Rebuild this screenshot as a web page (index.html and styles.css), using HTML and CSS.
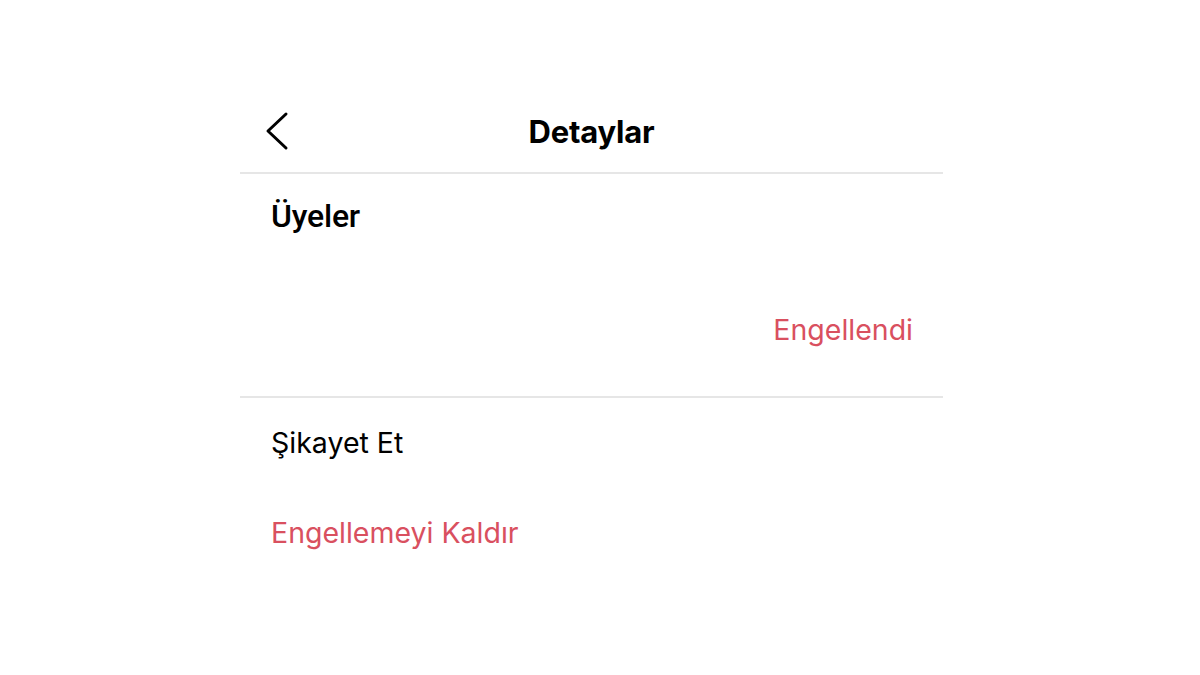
FILE: index.html
```html
<!DOCTYPE html>
<html lang="tr">
<head>
    <meta charset="UTF-8">
    <meta name="viewport" content="width=device-width, initial-scale=1.0">
    <title>Detaylar</title>
    <link rel="stylesheet" href="styles.css">
</head>
<body>

    <div class="screen">
        <header class="topbar">
            <button class="back-btn" aria-label="Geri">
                <svg width="24" height="40" viewBox="0 0 24 40">
                    <path d="M21 3 L3 20 L21 37" fill="none" stroke="#000" stroke-width="3" stroke-linecap="round" stroke-linejoin="round"/>
                </svg>
            </button>
            <h1>Detaylar</h1>
        </header>

        <!-- Uyeler listesi -->
        <section class="members">
            <h2>Üyeler</h2>
            <div class="member-row">
                <span class="status">Engellendi</span>
            </div>
        </section>

        <!-- Islemler -->
        <section class="actions">
            <a href="#" class="action">Şikayet Et</a>
            <a href="#" class="action danger">Engellemeyi Kaldır</a>
        </section>
    </div>

</body>
</html>
```

FILE: styles.css
```css
body {
    font-family: Inter, "Noto Sans", Arial, sans-serif;
    background-color: #ffffff;
    color: #000000;
    margin: 0;
    padding: 0;
}
.screen {
    width: 703px;
    margin-left: 240px;
    padding-top: 90px;
}
.topbar {
    display: grid;
    grid-template-columns: 1fr auto 1fr;
    align-items: center;
    height: 82px;
    border-bottom: 2px solid #e6e6e6;
}
.topbar h1 {
    margin: 0;
    font-size: 31px;
    font-weight: 700;
    letter-spacing: -0.2px;
}
.back-btn {
    justify-self: start;
    background: none;
    border: none;
    padding: 0;
    margin-left: 25px;
    cursor: pointer;
    display: flex;
}
.members {
    height: 222px;
    border-bottom: 2px solid #e6e6e6;
    padding: 0 30px 0 31px;
}
.members h2 {
    margin: 0;
    padding-top: 24px;
    font-family: Roboto, "Liberation Sans", sans-serif;
    font-size: 32px;
    font-weight: 500;
    line-height: 36px;
    letter-spacing: -0.2px;
}
.member-row {
    display: flex;
    justify-content: flex-end;
    align-items: center;
    height: 64px;
    margin-top: 63px;
}
.status {
    color: #d9505f;
    font-size: 28.5px;
}
.actions {
    display: flex;
    flex-direction: column;
    padding-left: 31px;
}
.action {
    display: flex;
    align-items: center;
    height: 88px;
    font-size: 28.5px;
    color: #000000;
    text-decoration: none;
}
.action.danger {
    height: 92px;
    color: #d9505f;
}
```
